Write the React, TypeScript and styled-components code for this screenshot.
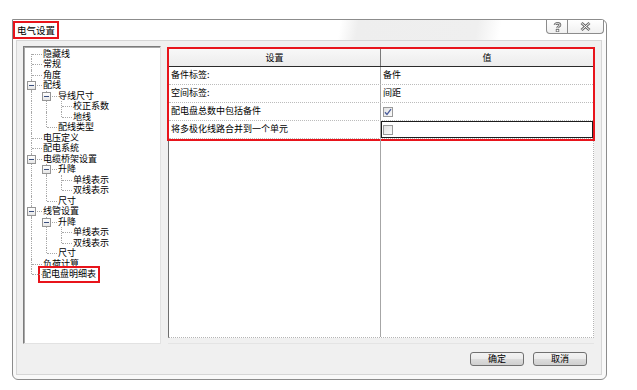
import React from 'react';
import styled, { createGlobalStyle } from 'styled-components';

const GlobalStyle = createGlobalStyle`
	html, body {
		margin: 0;
		padding: 0;
		background: #ffffff;
	}
	body {
		font-family: 'Noto Sans CJK SC', 'Noto Sans', sans-serif;
		font-size: 9px;
		color: #000;
	}
`;

const Window = styled.div`
	box-sizing: border-box;
	margin: 19px 0 0 12px;
	width: 595px;
	height: 361px;
	border: 1px solid #8c8c8c;
	border-radius: 0 6px 6px 6px;
	background: #f9f9f9;
	display: flex;
	flex-direction: column;
`;

const TitleBar = styled.div`
	height: 20px;
	flex: none;
	display: flex;
	align-items: flex-start;
	justify-content: space-between;
	padding-left: 2px;
	padding-right: 2px;
	background: linear-gradient(
		100deg,
		#ffffff 0%,
		#ffffff 55%,
		#eeeeee 58%,
		#efefef 78%,
		#ffffff 82%,
		#ffffff 100%
	);
	border-radius: 0 6px 0 0;
`;

const Title = styled.span`
	margin-top: 3px;
	padding: 0 2px;
	height: 14px;
	line-height: 14px;
	font-size: 9.5px;
	outline: 2px solid #e8141b;
`;

const CaptionButtons = styled.div`
	display: flex;
	height: 13px;
	border: 1px solid #8c8c8c;
	border-top: none;
	border-radius: 0 0 4px 4px;
	background: linear-gradient(#ffffff, #f0f0f0);
	overflow: hidden;
`;

const CaptionButton = styled.span<{ $w: number }>`
	display: flex;
	align-items: center;
	justify-content: center;
	width: ${(p) => p.$w}px;
	& + & {
		border-left: 1px solid #8c8c8c;
	}
`;

const Panel = styled.div`
	flex: 1;
	margin: 0 4px 4px 3px;
	border: 1px solid #d6d6d6;
	background: #f0f0f0;
	padding: 5px 7px 8px 6px;
	display: flex;
	flex-direction: column;
`;

const Main = styled.div`
	flex: 1;
	display: flex;
	gap: 7px;
	min-height: 0;
`;

const TreeBox = styled.div`
	box-sizing: border-box;
	width: 138px;
	flex: none;
	background: #fff;
	border-style: solid;
	border-width: 1px;
	border-color: #7c7c7c #e2e2e2 #e2e2e2 #7c7c7c;
	box-shadow: inset 1px 1px 0 #a9a9a9;
	padding-top: 1.5px;
`;

const TreeRow = styled.div`
	display: flex;
	align-items: center;
	height: 10.5px;
	white-space: nowrap;
`;

type GuideKind = 'pipe' | 'tee' | 'end' | 'first' | 'none';

const Guide = styled.span<{ $kind: GuideKind }>`
	position: relative;
	flex: none;
	width: 15px;
	align-self: stretch;

	&::before {
		content: '';
		position: absolute;
		left: 7px;
		top: ${(p) => (p.$kind === 'first' ? '50%' : '0')};
		bottom: ${(p) => (p.$kind === 'end' ? '50%' : '0')};
		border-left: 1px dotted #a8a8a8;
		display: ${(p) => (p.$kind === 'none' ? 'none' : 'block')};
	}
	&::after {
		content: '';
		position: absolute;
		left: 8px;
		right: -3px;
		top: 50%;
		border-top: 1px dotted #a8a8a8;
		display: ${(p) => (p.$kind === 'pipe' || p.$kind === 'none' ? 'none' : 'block')};
	}
`;

const Expander = styled.span`
	position: absolute;
	z-index: 1;
	left: 3px;
	top: 50%;
	margin-top: -4px;
	box-sizing: border-box;
	width: 9px;
	height: 9px;
	border: 1px solid #959595;
	background: linear-gradient(#3b4f7e, #3b4f7e) center / 5px 1px no-repeat,
		linear-gradient(#ffffff, #e6e6e6);
`;

const NodeLabel = styled.span<{ $marked?: boolean }>`
	margin-left: ${(p) => (p.$marked ? '1px' : '3px')};
	padding: ${(p) => (p.$marked ? '1px 2px' : '0 1px')};
	line-height: 10.5px;
	outline: ${(p) => (p.$marked ? '2px solid #e8141b' : 'none')};
`;

const GridFrame = styled.div`
	flex: 1;
	margin-top: 2px;
	display: flex;
	flex-direction: column;
	border-bottom: 1px solid #e4e4e4;
`;

const GridBody = styled.div`
	flex: 1;
	display: flex;
	flex-direction: column;
	margin-bottom: 5px;
	background: #fff;
	border-left: 1px solid #6e6e6e;
	border-top: 1px solid #6e6e6e;
	border-right: 1px dotted #b5b5b5;
	border-bottom: 1px dotted #b5b5b5;
`;

const MarkedTable = styled.div`
	outline: 2px solid #e8141b;
`;

const Row = styled.div<{ $head?: boolean }>`
	box-sizing: border-box;
	display: grid;
	grid-template-columns: 212px 1fr;
	height: 18px;
	background: ${(p) => (p.$head ? 'linear-gradient(#f8f8f8, #ececec)' : '#fff')};
	border-bottom: ${(p) => (p.$head ? '1px solid #2a2a2a' : '1px dotted #bcbcbc')};
`;

const Cell = styled.div<{ $head?: boolean; $selected?: boolean }>`
	box-sizing: border-box;
	display: flex;
	align-items: ${(p) => (p.$head ? 'center' : 'flex-start')};
	justify-content: ${(p) => (p.$head ? 'center' : 'flex-start')};
	padding: ${(p) => (p.$head ? '0' : '2px 2px 0 2px')};
	line-height: 11px;
	box-shadow: ${(p) => (p.$selected ? 'inset 0 0 0 1px #1c1c1c' : 'none')};
	&:first-child {
		border-right: 1px solid ${(p) => (p.$head ? '#7a7a7a' : '#a6a6a6')};
	}
`;

const CheckCell = styled(Cell)`
	padding: 4px 0 0 2px;
`;

const Box = styled.span`
	box-sizing: border-box;
	display: flex;
	align-items: center;
	justify-content: center;
	width: 10px;
	height: 10px;
	border: 1px solid #9a9a9a;
	background: linear-gradient(135deg, #e3e3e3, #fbfbfb);
`;

const Filler = styled.div`
	flex: 1;
	display: grid;
	grid-template-columns: 212px 1fr;
	& > span:first-child {
		border-right: 1px solid #a6a6a6;
	}
`;

const Buttons = styled.div`
	display: flex;
	justify-content: flex-end;
	gap: 9px;
	margin-top: 8px;
	padding-right: 7px;
`;

const Button = styled.button`
	box-sizing: border-box;
	width: 54px;
	height: 14px;
	padding: 0;
	border: 1px solid #707070;
	border-radius: 3px;
	background: linear-gradient(#f3f3f3 0%, #ebebeb 50%, #dddddd 51%, #cfcfcf 100%);
	font-family: inherit;
	font-size: 9px;
	line-height: 12px;
	color: #000;
`;

type Node = { text: string; level: number; open?: boolean; marked?: boolean };

const nodes: Node[] = [
	{ text: '隐藏线', level: 0 },
	{ text: '常规', level: 0 },
	{ text: '角度', level: 0 },
	{ text: '配线', level: 0, open: true },
	{ text: '导线尺寸', level: 1, open: true },
	{ text: '校正系数', level: 2 },
	{ text: '地线', level: 2 },
	{ text: '配线类型', level: 1 },
	{ text: '电压定义', level: 0 },
	{ text: '配电系统', level: 0 },
	{ text: '电缆桥架设置', level: 0, open: true },
	{ text: '升降', level: 1, open: true },
	{ text: '单线表示', level: 2 },
	{ text: '双线表示', level: 2 },
	{ text: '尺寸', level: 1 },
	{ text: '线管设置', level: 0, open: true },
	{ text: '升降', level: 1, open: true },
	{ text: '单线表示', level: 2 },
	{ text: '双线表示', level: 2 },
	{ text: '尺寸', level: 1 },
	{ text: '负荷计算', level: 0 },
	{ text: '配电盘明细表', level: 0, marked: true },
];

// is there another node at `level` further down before the branch closes
const continues = (index: number, level: number) => {
	for (let j = index + 1; j < nodes.length; j++) {
		if (nodes[j].level < level) return false;
		if (nodes[j].level === level) return true;
	}
	return false;
};

const guidesFor = (index: number): GuideKind[] => {
	const node = nodes[index];
	const out: GuideKind[] = [];
	for (let l = 0; l < node.level; l++) {
		out.push(continues(index, l) ? 'pipe' : 'none');
	}
	if (index === 0) out.push('first');
	else out.push(continues(index, node.level) ? 'tee' : 'end');
	return out;
};

const Check = () => (
	<svg width="8" height="8" viewBox="0 0 8 8">
		<path d="M1 4.2 L3 6.4 L7 1.2" fill="none" stroke="#4b5d9c" strokeWidth="1.3" />
	</svg>
);

const HelpIcon = () => (
	<svg width="9" height="10" viewBox="0 0 9 10">
		<path
			d="M2 3 C2 0.8 7 0.8 7 3 C7 4.6 4.5 4.4 4.5 6.3"
			fill="none"
			stroke="#6a6a6a"
			strokeWidth="2.6"
		/>
		<path
			d="M2 3 C2 0.8 7 0.8 7 3 C7 4.6 4.5 4.4 4.5 6.3"
			fill="none"
			stroke="#fff"
			strokeWidth="0.9"
		/>
		<rect x="3.2" y="7.4" width="2.6" height="2.4" fill="#fff" stroke="#6a6a6a" strokeWidth="0.8" />
	</svg>
);

const CloseIcon = () => (
	<svg width="11" height="9" viewBox="0 0 11 9">
		<path d="M1.5 1 L9.5 8 M9.5 1 L1.5 8" stroke="#6a6a6a" strokeWidth="2.8" />
		<path d="M1.5 1 L9.5 8 M9.5 1 L1.5 8" stroke="#fff" strokeWidth="1" />
	</svg>
);

const rows: { name: string; value?: string; check?: boolean; selected?: boolean }[] = [
	{ name: '备件标签:', value: '备件' },
	{ name: '空间标签:', value: '间距' },
	{ name: '配电盘总数中包括备件', check: true },
	{ name: '将多极化线路合并到一个单元', check: false, selected: true },
];

export default function App() {
	return (
		<>
			<GlobalStyle />
			<Window>
				<TitleBar>
					<Title>电气设置</Title>
					<CaptionButtons>
						<CaptionButton $w={20}>
							<HelpIcon />
						</CaptionButton>
						<CaptionButton $w={35}>
							<CloseIcon />
						</CaptionButton>
					</CaptionButtons>
				</TitleBar>
				<Panel>
					<Main>
						<TreeBox>
							{nodes.map((node, i) => {
								const guides = guidesFor(i);
								return (
									<TreeRow key={i}>
										{guides.map((g, k) => (
											<Guide key={k} $kind={g}>
												{k === guides.length - 1 && node.open && <Expander />}
											</Guide>
										))}
										<NodeLabel $marked={node.marked}>{node.text}</NodeLabel>
									</TreeRow>
								);
							})}
						</TreeBox>
						<GridFrame>
							<GridBody>
								<MarkedTable>
									<Row $head>
										<Cell $head>设置</Cell>
										<Cell $head>值</Cell>
									</Row>
									{rows.map((r) => (
										<Row key={r.name}>
											<Cell>{r.name}</Cell>
											{r.check === undefined ? (
												<Cell>{r.value}</Cell>
											) : (
												<CheckCell $selected={r.selected}>
													<Box>{r.check && <Check />}</Box>
												</CheckCell>
											)}
										</Row>
									))}
								</MarkedTable>
								<Filler>
									<span />
									<span />
								</Filler>
							</GridBody>
						</GridFrame>
					</Main>
					<Buttons>
						<Button>确定</Button>
						<Button>取消</Button>
					</Buttons>
				</Panel>
			</Window>
		</>
	);
}
